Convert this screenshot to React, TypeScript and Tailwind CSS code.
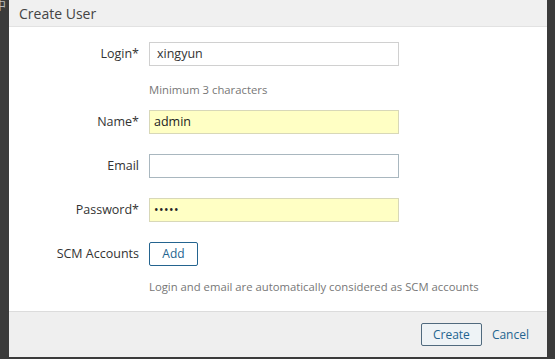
import React from "react";

function Row({ label, children }: { label: string; children: React.ReactNode }) {
  return (
    <div className="flex items-center h-[24px]">
      <div className="w-[140px] pr-[10px] text-right text-[12.5px] text-[#333]">{label}</div>
      {children}
    </div>
  );
}

export default function App() {
  const font = { fontFamily: '"Open Sans", "Noto Sans CJK SC", sans-serif' };
  return (
    <div className="w-[555px] h-[359px] bg-[#3a3a3a] flex flex-col overflow-hidden" style={font}>
      <div className="flex flex-1 min-h-0">
        <div className="w-[9px] bg-[#3b3b3b] relative overflow-hidden">
          <span className="absolute left-[-6px] top-[0px] text-[12px] text-[#bbb] leading-none">中</span>
        </div>
        <div className="flex-1 flex flex-col bg-white">
          <div className="h-[27px] bg-[#f0f0f0] border-b border-[#e2e2e2] flex items-center pl-[10px] text-[14px] text-[#444]">
            Create User
          </div>
          <div className="flex-1 flex flex-col pt-[15px]">
            <Row label="Login*">
              <div className="w-[250px] h-[24px] border border-[#d0d0d0] bg-white flex items-center px-[7px] text-[12.5px] text-[#333]">
                xingyun
              </div>
            </Row>
            <div className="pl-[140px] mt-[13px] text-[11.3px] text-[#777] leading-[22px]">Minimum 3 characters</div>
            <div className="mt-[9px]">
              <Row label="Name*">
                <div className="w-[250px] h-[24px] border border-[#d8d8b8] bg-[#ffffc4] flex items-center px-[4px] text-[12.5px] text-[#222]">
                  admin
                </div>
              </Row>
            </div>
            <div className="mt-[20px]">
              <Row label="Email">
                <div className="w-[250px] h-[24px] border border-[#a9b7bf] bg-white" />
              </Row>
            </div>
            <div className="mt-[20px]">
              <Row label="Password*">
                <div className="w-[250px] h-[24px] border border-[#d8d8b8] bg-[#ffffc4] flex items-center px-[4px] text-[12px] text-[#222] tracking-[0.5px]">
                  •••••
                </div>
              </Row>
            </div>
            <div className="mt-[20px]">
              <Row label="SCM Accounts">
                <div className="w-[49px] h-[24px] border border-[#24648f] rounded-[2px] bg-white flex items-center justify-center text-[12px] text-[#24648f]">
                  Add
                </div>
              </Row>
            </div>
            <div className="pl-[140px] mt-[10px] text-[11.3px] text-[#777] leading-[22px]">
              Login and email are automatically considered as SCM accounts
            </div>
          </div>
          <div className="h-[46px] bg-[#efefef] border-t border-[#dcdcdc] flex items-center justify-end pr-[18px] gap-[10px]">
            <div className="w-[61px] h-[23px] border border-[#506a7e] rounded-[2px] bg-[#eef3f6] flex items-center justify-center text-[12px] text-[#24648f]">
              Create
            </div>
            <div className="text-[12px] text-[#24648f]">Cancel</div>
          </div>
        </div>
        <div className="w-[8px] bg-[#3b3b3b]" />
      </div>
      <div className="h-[2px] bg-[#3b3b3b]" />
    </div>
  );
}
